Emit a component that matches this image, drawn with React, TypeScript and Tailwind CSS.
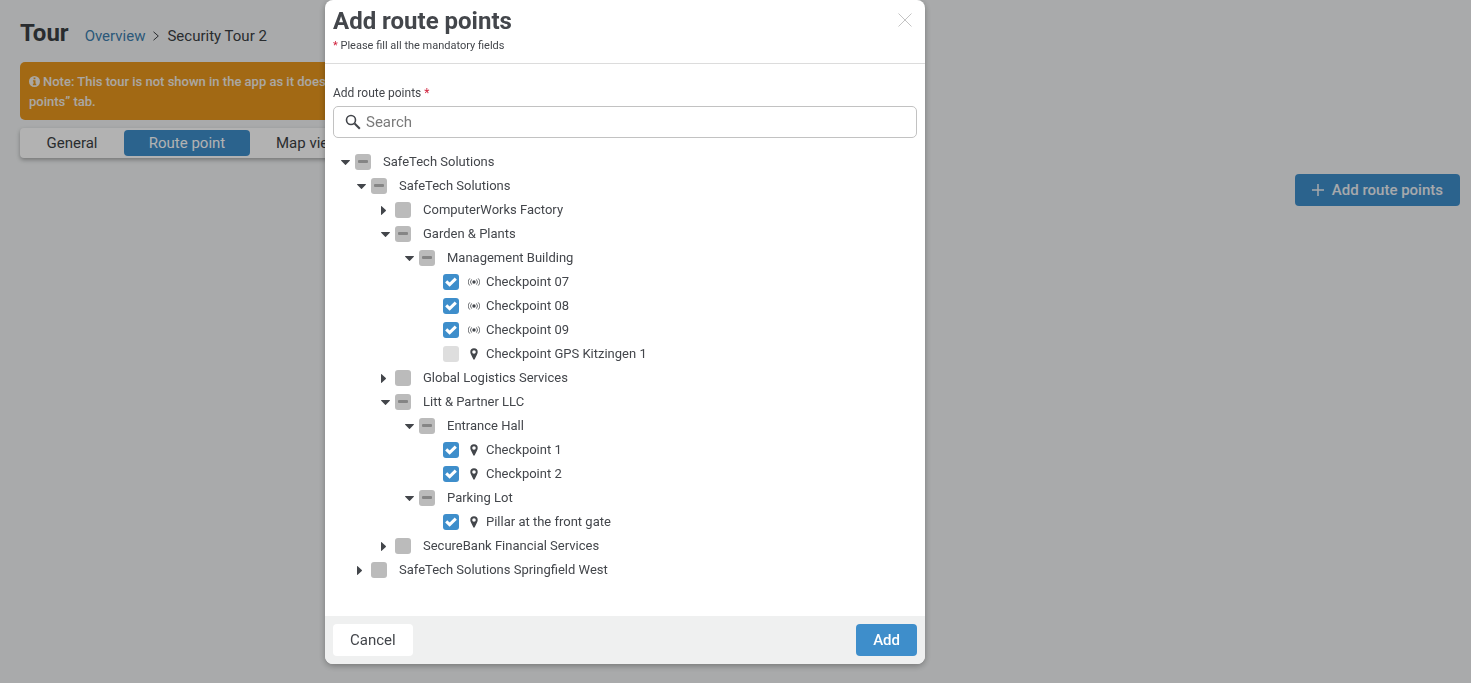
import React from "react";

type Check = "mixed" | "off" | "on" | "none";

type TreeNode = {
  id: string;
  label: string;
  check: Check;
  icon?: "nfc" | "gps";
  open?: boolean;
  children?: TreeNode[];
};

const tree: TreeNode[] = [
  {
    id: "root",
    label: "SafeTech Solutions",
    check: "mixed",
    open: true,
    children: [
      {
        id: "main",
        label: "SafeTech Solutions",
        check: "mixed",
        open: true,
        children: [
          { id: "cwf", label: "ComputerWorks Factory", check: "off", children: [] },
          {
            id: "garden",
            label: "Garden & Plants",
            check: "mixed",
            open: true,
            children: [
              {
                id: "mgmt",
                label: "Management Building",
                check: "mixed",
                open: true,
                children: [
                  { id: "cp07", label: "Checkpoint 07", check: "on", icon: "nfc" },
                  { id: "cp08", label: "Checkpoint 08", check: "on", icon: "nfc" },
                  { id: "cp09", label: "Checkpoint 09", check: "on", icon: "nfc" },
                  { id: "gps1", label: "Checkpoint GPS Kitzingen 1", check: "none", icon: "gps" },
                ],
              },
            ],
          },
          { id: "gls", label: "Global Logistics Services", check: "off", children: [] },
          {
            id: "litt",
            label: "Litt & Partner LLC",
            check: "mixed",
            open: true,
            children: [
              {
                id: "hall",
                label: "Entrance Hall",
                check: "mixed",
                open: true,
                children: [
                  { id: "cp1", label: "Checkpoint 1", check: "on", icon: "gps" },
                  { id: "cp2", label: "Checkpoint 2", check: "on", icon: "gps" },
                ],
              },
              {
                id: "lot",
                label: "Parking Lot",
                check: "mixed",
                open: true,
                children: [
                  { id: "pillar", label: "Pillar at the front gate", check: "on", icon: "gps" },
                ],
              },
            ],
          },
          { id: "sbf", label: "SecureBank Financial Services", check: "off", children: [] },
        ],
      },
      { id: "west", label: "SafeTech Solutions Springfield West", check: "off", children: [] },
    ],
  },
];

const boxColor: Record<Check, string> = {
  mixed: "bg-[#bbbbbb]",
  off: "bg-[#bbbbbb]",
  on: "bg-[#3e8ecb]",
  none: "bg-[#dedede]",
};

function Caret({ open }: { open: boolean }) {
  return open ? (
    <svg width="9" height="5" viewBox="0 0 9 5" fill="currentColor" aria-hidden="true">
      <path d="M0.5 0h8a.4.4 0 0 1 .3.7L4.9 4.7a.6.6 0 0 1-.8 0L.2.7A.4.4 0 0 1 .5 0z" />
    </svg>
  ) : (
    <svg width="5" height="9" viewBox="0 0 5 9" fill="currentColor" aria-hidden="true">
      <path d="M0 0.5v8a.4.4 0 0 0 .7.3L4.8 4.9a.6.6 0 0 0 0-.8L.7.2A.4.4 0 0 0 0 .5z" />
    </svg>
  );
}

function PointIcon({ kind }: { kind: "nfc" | "gps" }) {
  return kind === "nfc" ? (
    <svg width="12" height="12" viewBox="0 0 12 12" fill="none" stroke="currentColor" aria-hidden="true">
      <circle cx="6" cy="6" r="1.7" fill="currentColor" stroke="none" />
      <path strokeWidth="0.8" d="M3.6 3.4a3.9 3.9 0 0 0 0 5.2M8.4 3.4a3.9 3.9 0 0 1 0 5.2M1.8 2.4a5.4 5.4 0 0 0 0 7.2M10.2 2.4a5.4 5.4 0 0 1 0 7.2" />
    </svg>
  ) : (
    <svg width="12" height="12" viewBox="0 0 12 12" fill="currentColor" aria-hidden="true">
      <path fillRule="evenodd" d="M6 0.3A3.7 3.7 0 0 0 2.3 4c0 1 .3 1.6.7 2.4l2.3 4.8c.3.6 1.1.6 1.4 0L9 6.4c.4-.8.7-1.4.7-2.4A3.7 3.7 0 0 0 6 .3zm0 1.9a1.8 1.8 0 1 1 0 3.6 1.8 1.8 0 0 1 0-3.6z" />
    </svg>
  );
}

function TreeItem({ node }: { node: TreeNode }) {
  return (
    <li>
      <div className="flex h-6 items-center">
        <span className="flex w-[14px] shrink-0 items-center">
          {node.children && (
            <button type="button" aria-label={`Toggle ${node.label}`} aria-expanded={!!node.open}>
              <Caret open={!!node.open} />
            </button>
          )}
        </span>
        <span className="grid size-4 shrink-0 place-items-center">
          <input
            id={node.id}
            type="checkbox"
            defaultChecked={node.check === "on"}
            ref={(el) => {
              if (el) el.indeterminate = node.check === "mixed";
            }}
            className={`col-start-1 row-start-1 size-4 appearance-none rounded-[3px] ${boxColor[node.check]}`}
          />
          {node.check === "mixed" && (
            <span className="pointer-events-none col-start-1 row-start-1 mb-px h-[3px] w-[10px] rounded-[1px] bg-[#858585]" />
          )}
          {node.check === "on" && (
            <svg className="pointer-events-none col-start-1 row-start-1" width="12" height="12" viewBox="0 0 12 12" fill="none" stroke="white" strokeWidth="3" aria-hidden="true">
              <path d="M1.2 5.4 4.6 8.6 10.8 2.6" />
            </svg>
          )}
        </span>
        <label htmlFor={node.id} className={`flex items-center leading-6 whitespace-nowrap ${node.icon ? "gap-[6px] pl-[9px]" : "pl-3"}`}>
          {node.icon && <PointIcon kind={node.icon} />}
          {node.label}
        </label>
      </div>
      {node.open && node.children && (
        <ul className={node.id === "root" ? "pl-4" : "pl-6"}>
          {node.children.map((child) => (
            <TreeItem key={child.id} node={child} />
          ))}
        </ul>
      )}
    </li>
  );
}

function TourPage() {
  return (
    <main className="px-5 pt-4 pr-[11px]">
      <header className="flex items-center gap-4">
        <h1 className="text-2xl leading-[34px] font-bold">Tour</h1>
        <nav aria-label="Breadcrumb" className="flex items-center gap-2 pt-[6px] text-[15px] leading-6">
          <a href="#overview" className="text-[#3e7eae]">Overview</a>
          <svg width="6" height="10" viewBox="0 0 6 10" fill="none" stroke="currentColor" aria-hidden="true">
            <path d="M.5 .8 5.3 5 .5 9.2" />
          </svg>
          <span>Security Tour 2</span>
        </nav>
      </header>
      <div className="mt-3 max-w-[760px] rounded-[5px] bg-[#e8971e] px-[9px] pt-[10px] pb-2 text-[13px] leading-5 font-medium text-[#f4f0ea]">
        <svg className="mr-[3px] inline align-[-1px]" width="11" height="11" viewBox="0 0 12 12" aria-hidden="true">
          <circle cx="6" cy="6" r="6" fill="currentColor" />
          <path fill="#e8971e" d="M5 1.7h2v1.8H5zM4.3 4.6h2.8v3.9h.8V10H4.2V8.5H5V6h-.7z" />
        </svg>
        Note: This tour is not shown in the app as it does not have any route points yet. Please add at least one point in the “Route points” tab.
      </div>
      <nav aria-label="Tour sections" className="mt-2 flex h-[30px] max-w-[400px] items-center rounded-[4px] bg-white text-[15px] whitespace-nowrap shadow-[0_2px_4px_rgba(0,0,0,0.3)]">
        <a href="#general" className="w-[104px] text-center">General</a>
        <a href="#route" className="flex h-[26px] w-[126px] items-center justify-center rounded-[4px] bg-[#3e8ecb] text-white">Route point</a>
        <a href="#map" className="px-[26px]">Map view</a>
      </nav>
      <div className="mt-4 flex justify-end">
        <button type="button" className="flex h-8 items-center gap-2 rounded-[4px] bg-[#3e8ecb] px-[17px] text-[15px] font-medium text-[#eef2f6]">
          <svg width="12" height="12" viewBox="0 0 12 12" stroke="currentColor" strokeWidth="1.5" aria-hidden="true">
            <path d="M6 0v12M0 6h12" />
          </svg>
          Add route points
        </button>
      </div>
    </main>
  );
}

export default function App() {
  return (
    <div className="min-h-screen bg-[#f2f4f5] font-[Roboto,sans-serif] text-[#3c3f44]">
      <TourPage />
      <div className="fixed inset-0 overflow-hidden bg-black/30 pl-[325px]">
        <section role="dialog" aria-modal="true" aria-labelledby="dialog-title" className="w-full max-w-[600px] rounded-lg bg-white text-[#43464b] shadow-[0_2px_6px_rgba(0,0,0,0.3)]">
          <header className="flex items-start justify-between border-b border-[#dcdcdc] px-2 pt-[5px] pb-[9px]">
            <div>
              <h2 id="dialog-title" className="text-2xl leading-8 font-bold">Add route points</h2>
              <p className="mt-px text-[11px] leading-4"><span className="text-[#d0213c]">*</span> Please fill all the mandatory fields</p>
            </div>
            <button type="button" aria-label="Close" className="p-[5px] pt-2 text-[#c4c4c4]">
              <svg width="14" height="14" viewBox="0 0 14 14" fill="none" stroke="currentColor" aria-hidden="true">
                <path d="M.5 .5l13 13M13.5 .5l-13 13" />
              </svg>
            </button>
          </header>
          <div className="px-2 pt-5 pb-[34px]">
            <label htmlFor="search" className="block text-xs leading-[18px]">
              Add route points <span className="text-[#d0213c]">*</span>
            </label>
            <div className="mt-1 flex h-8 items-center gap-[5px] rounded-[5px] border border-[#c2c2c2] px-[11px]">
              <svg width="16" height="16" viewBox="0 0 16 16" fill="none" stroke="currentColor" aria-hidden="true">
                <circle cx="6" cy="6" r="4.5" strokeWidth="1.6" />
                <path strokeWidth="2.1" d="M9.6 9.6 14.8 14.8" />
              </svg>
              <input id="search" type="text" placeholder="Search" className="min-w-0 flex-1 text-[15px] leading-6 outline-none placeholder:text-[#7a7a7a]" />
            </div>
            <ul className="mt-3 pl-2 text-[13px]">
              {tree.map((node) => (
                <TreeItem key={node.id} node={node} />
              ))}
            </ul>
          </div>
          <footer className="flex justify-between rounded-b-lg bg-[#eff0f0] p-2">
            <button type="button" className="h-8 rounded-[4px] bg-white px-[17px] text-[15px]">Cancel</button>
            <button type="button" className="h-8 rounded-[4px] bg-[#3e8ecb] px-[17px] text-[15px] font-medium text-white">Add</button>
          </footer>
        </section>
      </div>
    </div>
  );
}
